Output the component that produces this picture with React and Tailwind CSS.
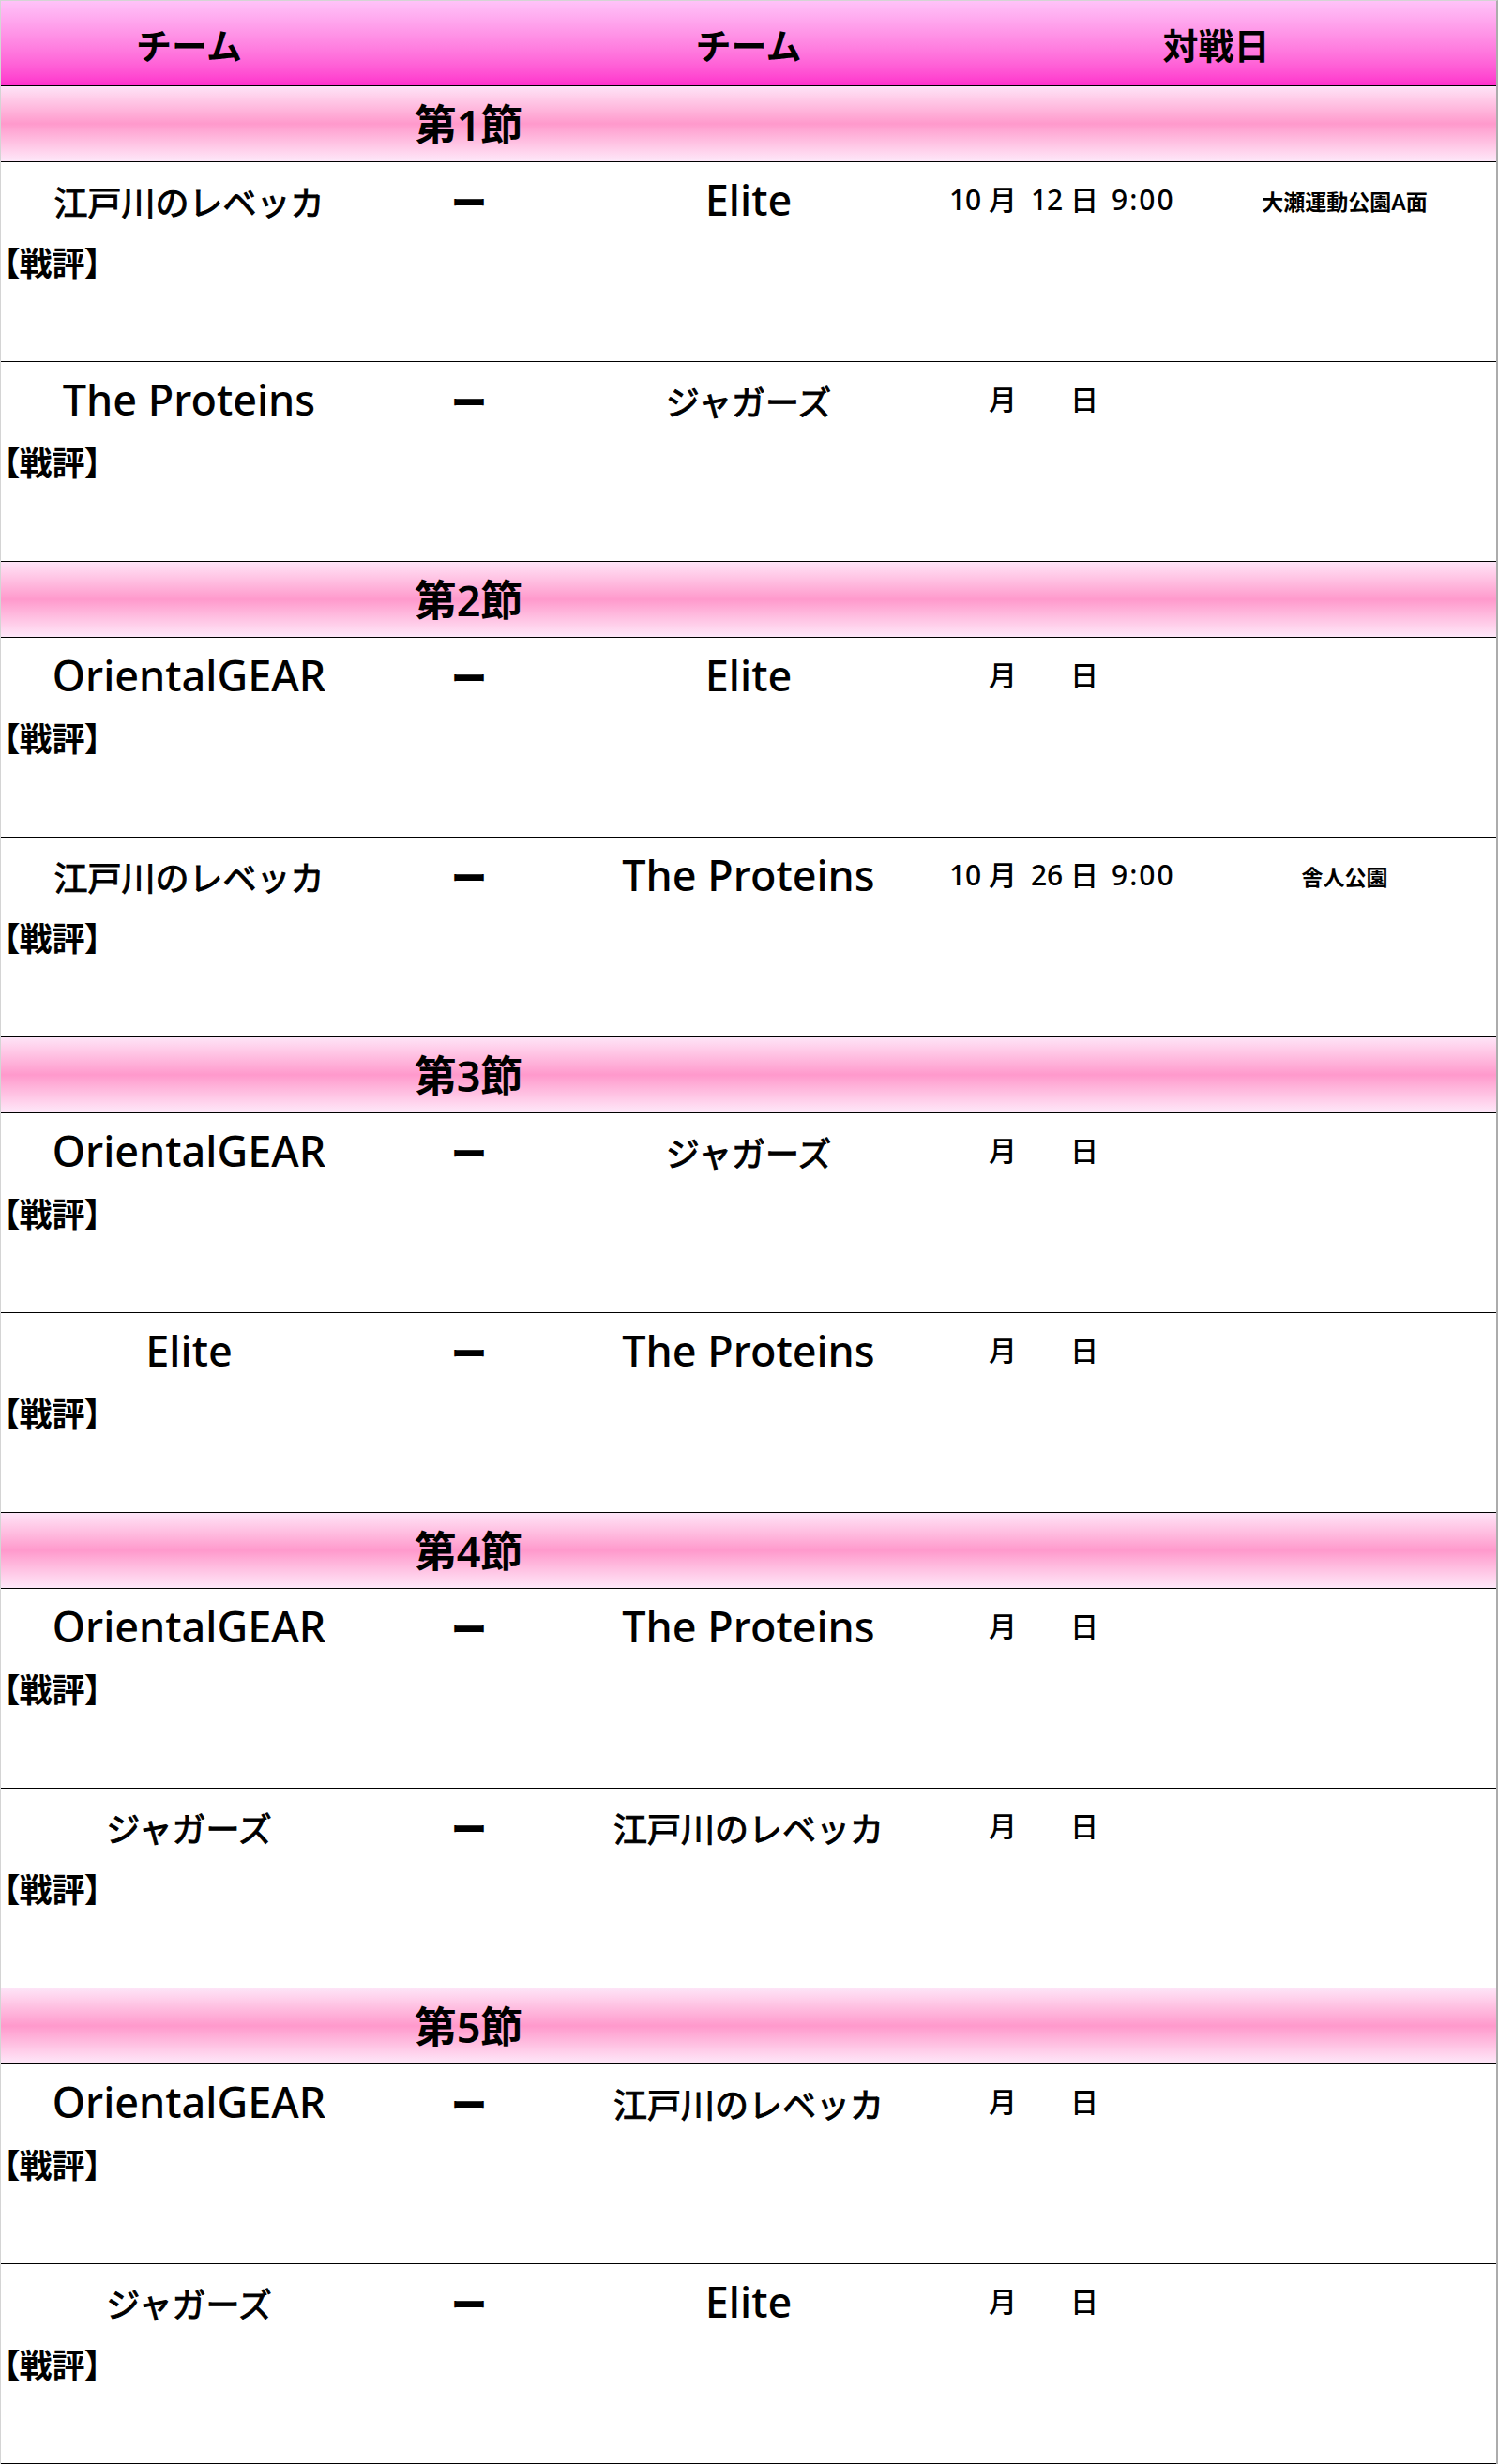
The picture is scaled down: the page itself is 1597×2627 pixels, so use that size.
const rounds = [
  {
    title: '第1節',
    games: [
      { home: '江戸川のレベッカ', away: 'Elite', month: '10', day: '12', time: '9:00', place: '大瀬運動公園A面' },
      { home: 'The Proteins', away: 'ジャガーズ' },
    ],
  },
  {
    title: '第2節',
    games: [
      { home: 'OrientalGEAR', away: 'Elite' },
      { home: '江戸川のレベッカ', away: 'The Proteins', month: '10', day: '26', time: '9:00', place: '舎人公園' },
    ],
  },
  {
    title: '第3節',
    games: [
      { home: 'OrientalGEAR', away: 'ジャガーズ' },
      { home: 'Elite', away: 'The Proteins' },
    ],
  },
  {
    title: '第4節',
    games: [
      { home: 'OrientalGEAR', away: 'The Proteins' },
      { home: 'ジャガーズ', away: '江戸川のレベッカ' },
    ],
  },
  {
    title: '第5節',
    games: [
      { home: 'OrientalGEAR', away: '江戸川のレベッカ' },
      { home: 'ジャガーズ', away: 'Elite' },
    ],
  },
];

// japanese names are drawn smaller than latin ones
const isJa = (s) => /[^\x00-\x7F]/.test(s);

function TeamName({ name }) {
  if (isJa(name)) return <span className="text-[36px] font-normal [-webkit-text-stroke:1px_black]">{name}</span>;
  return <span className="font-medium">{name}</span>;
}

function GameRow({ game }) {
  return (
    <div className="h-[213px] border-b border-black bg-white">
      <div className="flex items-start pt-[17px]">
        <div className="w-[401px] text-center text-[45px] leading-none">
          <TeamName name={game.home} />
        </div>
        <div className="w-[196px] text-center text-[45px] leading-none">
          <span className="text-[38px] font-black">ー</span>
        </div>
        <div className="w-[400px] text-center text-[45px] leading-none">
          <TeamName name={game.away} />
        </div>
        <div className="flex-1 flex items-baseline mt-[8px] text-[30px] leading-none font-medium">
          <div className="w-[86px] text-right">{game.month ? game.month + ' ' : ''}月</div>
          <div className="w-[87px] text-right">{game.day ? game.day + ' ' : ''}日</div>
          <div className="w-[101px] pl-[14px] tracking-[2px]">{game.time}</div>
          <div className="flex-1 text-center text-[23px] font-semibold">{game.place}</div>
        </div>
      </div>
      <div className="mt-[28px] pl-[2px] text-[35px] leading-none font-semibold [font-feature-settings:'palt']">
        【戦評】
      </div>
    </div>
  );
}

export default function App() {
  return (
    <div className="w-full bg-white text-black font-['Noto_Sans','Noto_Sans_CJK_JP',sans-serif] border-t border-l border-[#d4d4d4] border-r-2 border-r-[#acacac]">
      {/* header */}
      <div className="h-[91px] flex items-center pt-[3px] border-b border-black bg-gradient-to-b from-[#ffc2f8] to-[#ff30cc] text-[38px] leading-none font-semibold">
        <div className="w-[401px] text-center">チーム</div>
        <div className="w-[196px]"></div>
        <div className="w-[400px] text-center">チーム</div>
        <div className="flex-1 text-center">対戦日</div>
      </div>

      {rounds.map((r) => (
        <div key={r.title}>
          <div className="h-[81px] flex items-center border-b border-black bg-gradient-to-b from-[#fde4f7] via-[#ff99cc] to-[#fde8f9]">
            <div className="w-[997px] text-center text-[45px] leading-none font-semibold">{r.title}</div>
          </div>
          {r.games.map((g, i) => (
            <GameRow key={i} game={g} />
          ))}
        </div>
      ))}
    </div>
  );
}
